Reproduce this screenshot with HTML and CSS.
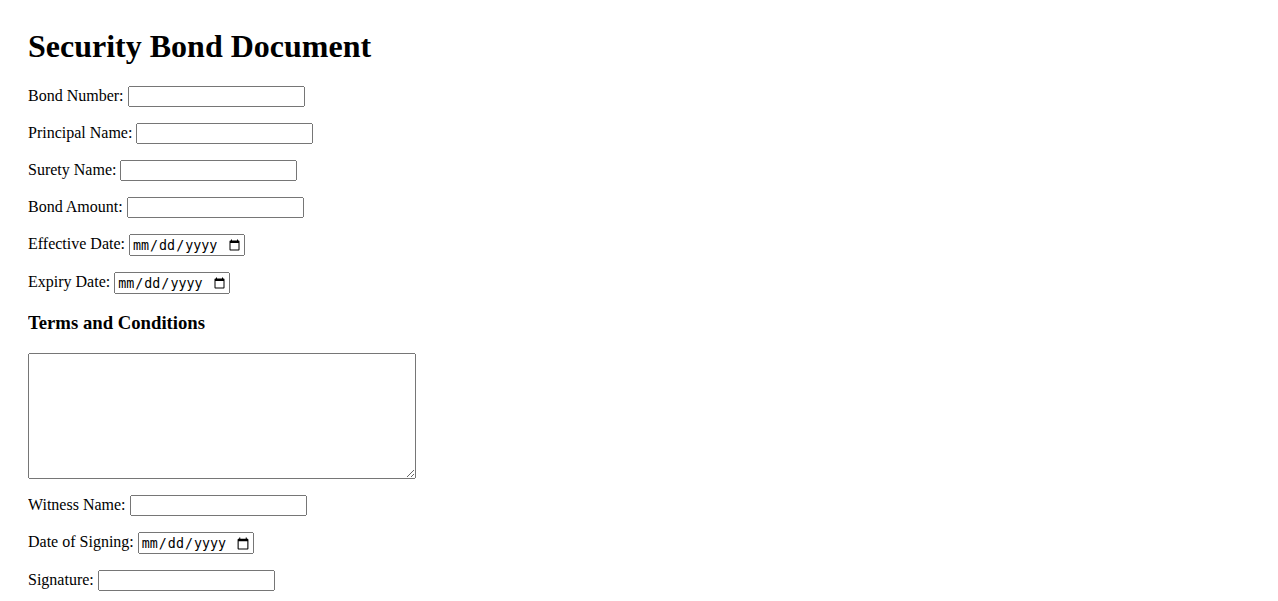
FILE: index.html
```html
<!DOCTYPE html>
<html lang="en">
<head>
  <meta charset="UTF-8">
  <meta name="viewport" content="width=device-width, initial-scale=1.0">
  <title>Security Bond Document</title>
  <link rel="stylesheet" href="styles.css">
</head>
<body>
  <h1 class="doc-title">Security Bond Document</h1>

  <form>
    <p><label for="bondNumber">Bond Number:</label> <input type="text" id="bondNumber" class="text-field"></p>
    <p><label for="principal">Principal Name:</label> <input type="text" id="principal" class="text-field"></p>
    <p><label for="surety">Surety Name:</label> <input type="text" id="surety" class="text-field"></p>
    <p><label for="amount">Bond Amount:</label> <input type="text" id="amount" class="text-field"></p>
    <p><label for="effective">Effective Date:</label> <input type="date" id="effective" class="date-field"></p>
    <p><label for="expiry">Expiry Date:</label> <input type="date" id="expiry" class="date-field"></p>

    <h3 class="section-title">Terms and Conditions</h3>
    <textarea id="terms" class="terms"></textarea>

    <p><label for="witness">Witness Name:</label> <input type="text" id="witness" class="text-field"></p>
    <p><label for="signDate">Date of Signing:</label> <input type="date" id="signDate" class="date-field"></p>
    <p><label for="signature">Signature:</label> <input type="text" id="signature" class="text-field"></p>
  </form>
</body>
</html>
```

FILE: styles.css
```css
body {
  margin: 28px;
  font-family: "Liberation Serif", "Times New Roman", serif;
  font-size: 16px;
  color: #000;
  background: #fff;
}

.doc-title {
  margin-top: 0;
}

.section-title {
  margin: 18px 0 19px;
}

/* form fields */
.text-field {
  box-sizing: border-box;
  width: 177px;
  height: 21px;
}

.date-field {
  box-sizing: border-box;
  width: 116px;
  height: 22px;
}

.terms {
  box-sizing: border-box;
  display: block;
  width: 388px;
  height: 126px;
  margin: 0;
}
```
